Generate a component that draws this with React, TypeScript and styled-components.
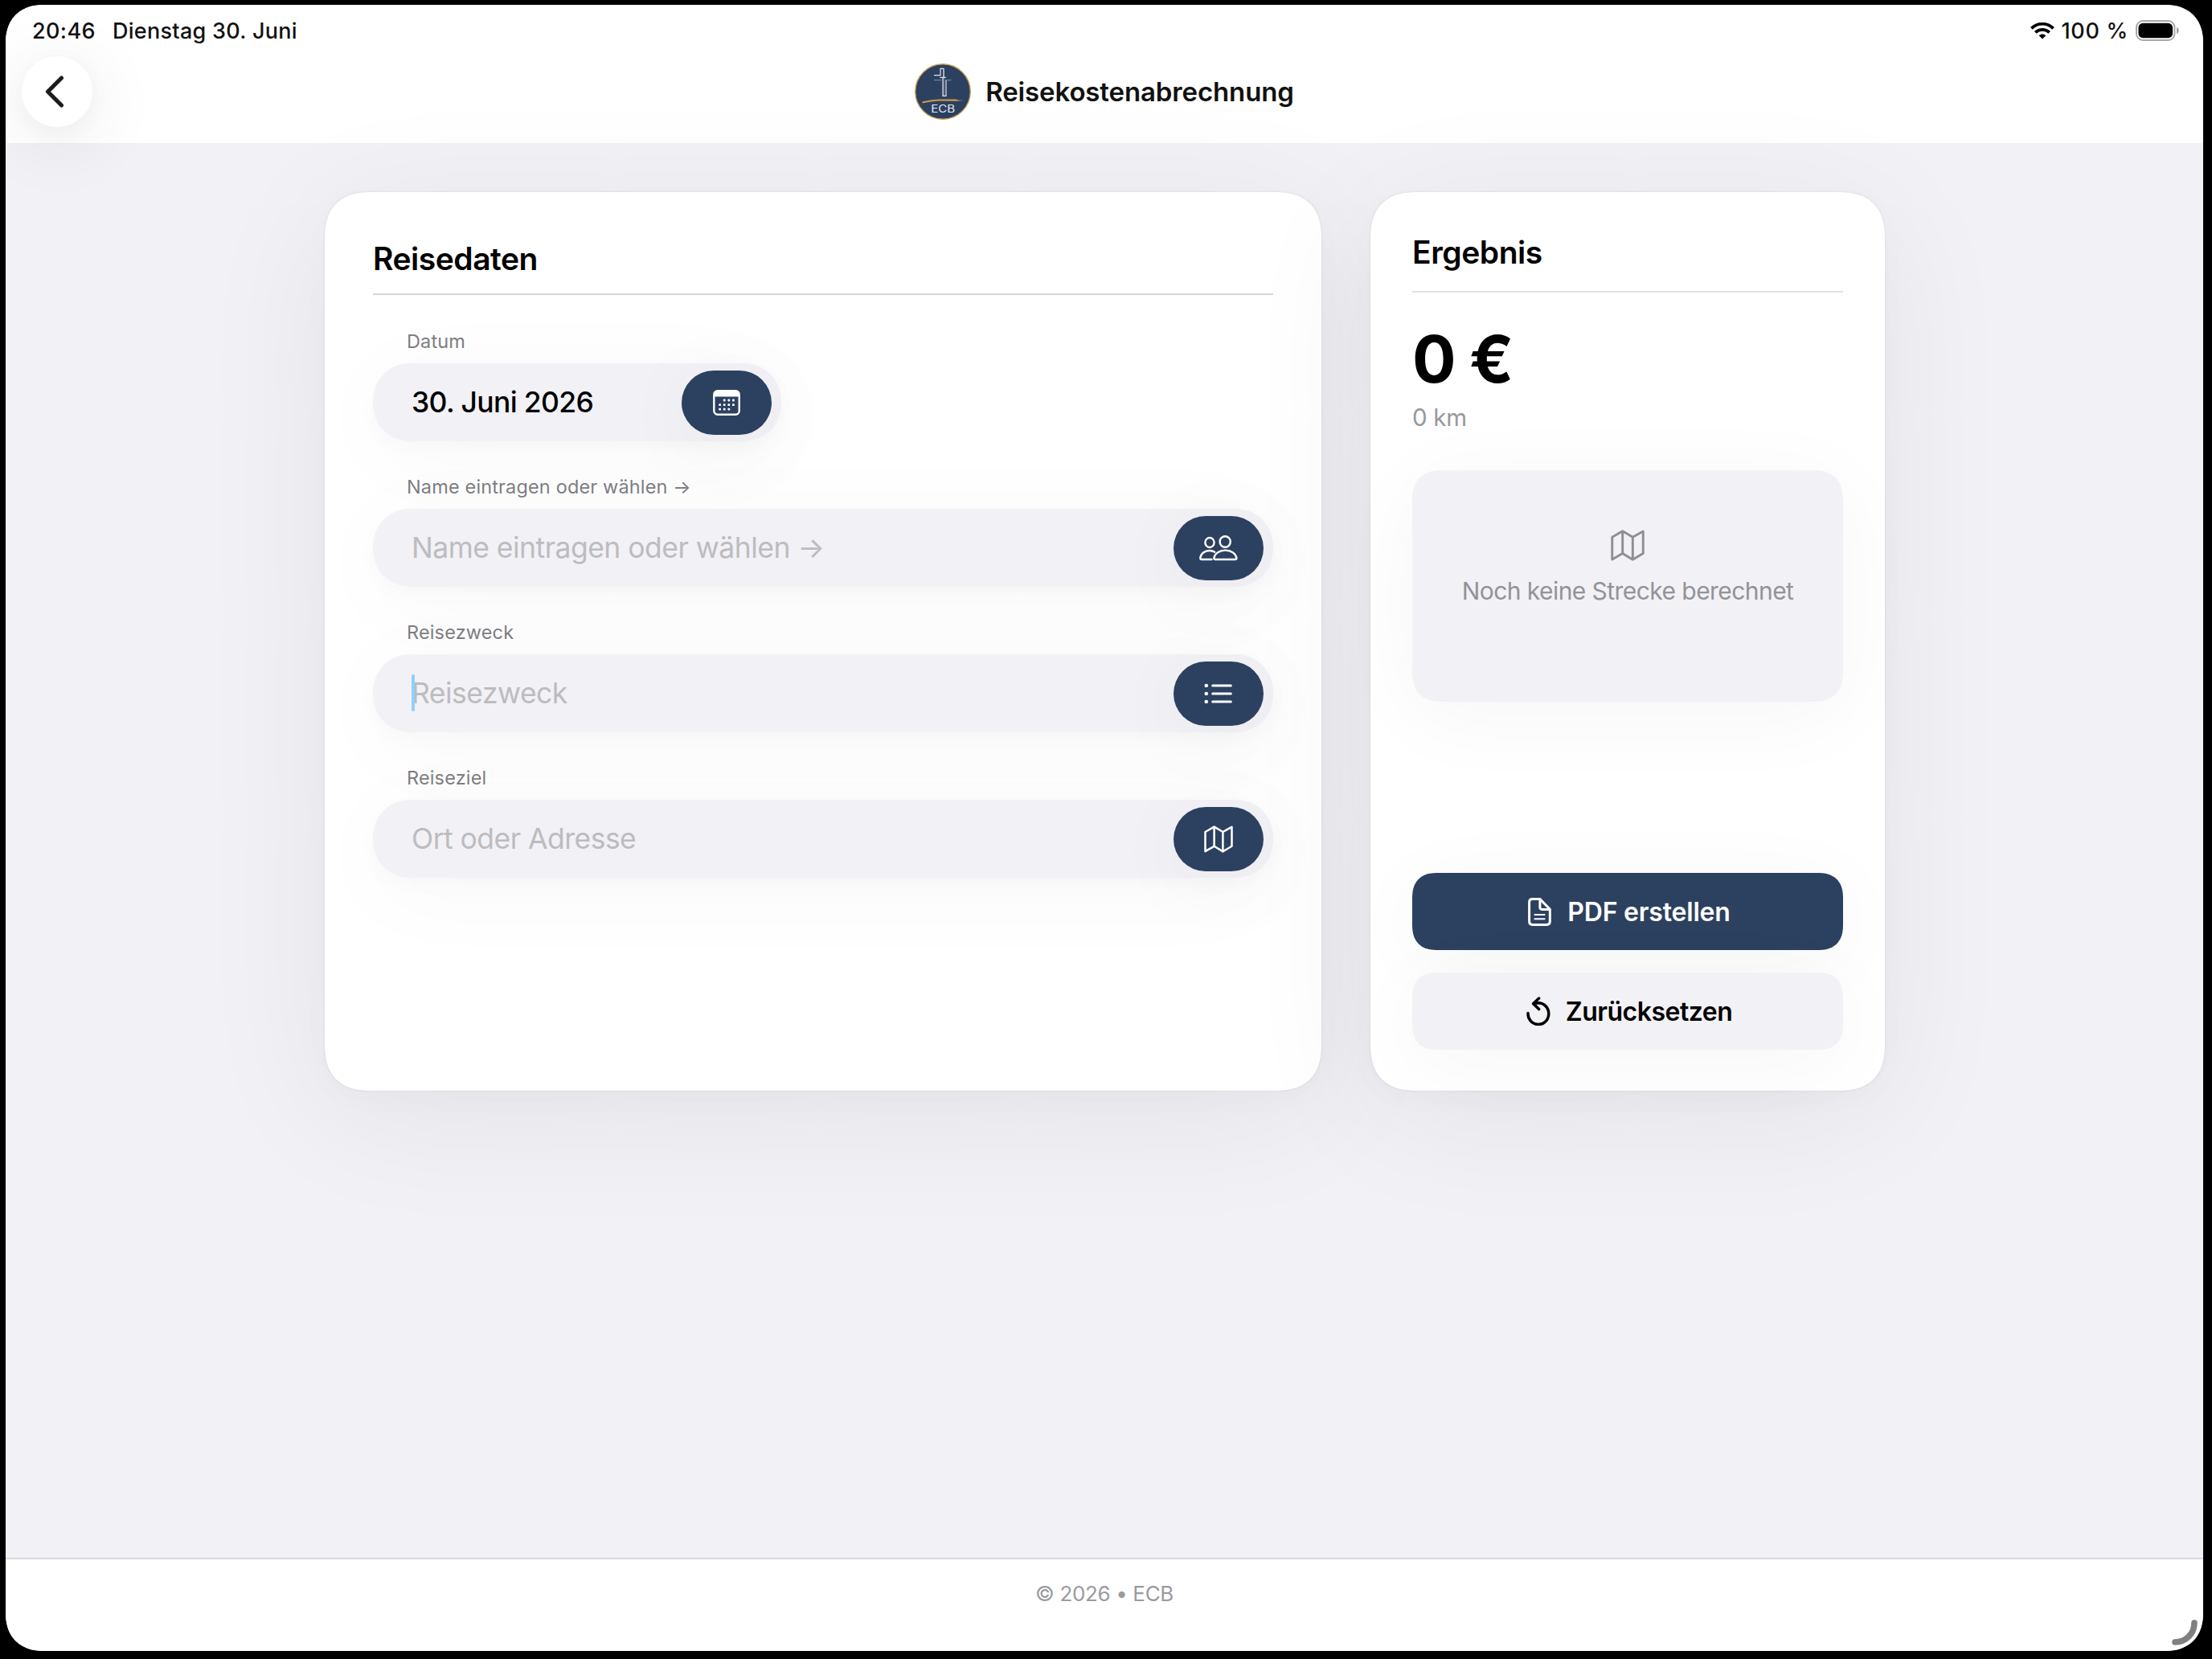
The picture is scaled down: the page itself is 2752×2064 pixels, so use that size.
import React from 'react';
import styled, { createGlobalStyle } from 'styled-components';

const GlobalStyle = createGlobalStyle`
  * {
    box-sizing: border-box;
  }

  body {
    margin: 0;
    background: #000;
    color: #000;
    font-family: Inter, 'Liberation Sans', sans-serif;
  }
`;

const Device = styled.div`
  width: 2752px;
  height: 2064px;
  padding: 6px 11px 10px 7px;
  background: #000;
`;

const Screen = styled.div`
  position: relative;
  display: flex;
  flex-direction: column;
  height: 100%;
  border-radius: 48px;
  corner-shape: superellipse(1.2);
  background: #f2f1f6;
  overflow: hidden;
`;

const Header = styled.header`
  height: 172px;
  background: #fff;
`;

const StatusBar = styled.div`
  display: flex;
  align-items: center;
  height: 64px;
  padding: 0 29px 0 33px;
  font-size: 27px;
  font-weight: 500;
  color: #111;
`;

const Time = styled.span`
  letter-spacing: 0.4px;
`;

const DateText = styled.span`
  flex: 1;
  margin-left: 21px;
  letter-spacing: 0.28px;
`;

const Battery = styled.span`
  margin: 0 9px 0 8px;
  letter-spacing: 0.7px;
`;

const NavBar = styled.div`
  display: grid;
  grid-template-columns: 88px 1fr 88px;
  align-items: center;
  padding: 0 20px;
`;

const BackButton = styled.button`
  display: flex;
  align-items: center;
  justify-content: center;
  width: 88px;
  height: 88px;
  padding: 0 7px 0 0;
  border: none;
  border-radius: 50%;
  background: #fff;
  box-shadow: 0 16px 90px rgba(0, 0, 0, 0.1), 0 6px 30px rgba(0, 0, 0, 0.03);
`;

const Brand = styled.div`
  display: flex;
  align-items: center;
  justify-content: center;
  gap: 18px;
`;

const BrandTitle = styled.h1`
  margin: 0;
  font-size: 33px;
  font-weight: 600;
  letter-spacing: -0.13px;
  color: #111;
`;

const Main = styled.main`
  display: flex;
  flex: 1;
  justify-content: center;
  align-items: flex-start;
  gap: 61px;
  padding: 61px 0 0 1px;
`;

const Card = styled.section<{ $width: number; $padding: string }>`
  display: flex;
  flex-direction: column;
  width: ${p => p.$width}px;
  height: 1118px;
  padding: ${p => p.$padding};
  border-radius: 60px;
  corner-shape: superellipse(1.35);
  background: #fff;
  box-shadow: 0 0 2px 1px rgba(0, 0, 0, 0.045), 0 28px 170px rgba(0, 0, 0, 0.065),
    0 10px 40px rgba(0, 0, 0, 0.018);
`;

const CardTitle = styled.h2<{ $gap: number; $line: string }>`
  margin: 0;
  padding-bottom: ${p => p.$gap}px;
  border-bottom: 2px solid ${p => p.$line};
  font-size: 39px;
  line-height: 48px;
  font-weight: 600;
  letter-spacing: -0.48px;
`;

const Fields = styled.div`
  display: flex;
  flex-direction: column;
  gap: 43px;
  padding-top: 44px;
`;

const Label = styled.div`
  padding-left: 42px;
  margin-bottom: 13px;
  font-size: 23.5px;
  line-height: 28px;
  letter-spacing: 0.15px;
  color: #7d7d82;
`;

const FieldBox = styled.div<{ $narrow?: boolean }>`
  display: flex;
  align-items: center;
  justify-content: space-between;
  width: ${p => (p.$narrow ? '508px' : '100%')};
  height: 97px;
  padding: 0 12px 0 48px;
  border-radius: 52px;
  corner-shape: superellipse(1.1);
  background: #f2f1f6;
  box-shadow: 0 8px 24px rgba(0, 0, 0, 0.022), 0 18px 120px rgba(0, 0, 0, 0.03);
`;

const FieldText = styled.span<{ $filled?: boolean }>`
  position: relative;
  font-size: 35.5px;
  font-weight: ${p => (p.$filled ? 500 : 430)};
  letter-spacing: ${p => (p.$filled ? '-0.64px' : '-0.52px')};
  color: ${p => (p.$filled ? '#000' : '#bcbcc0')};
`;

const Caret = styled.span`
  position: absolute;
  left: 0;
  top: -2px;
  width: 4px;
  height: 46px;
  border-radius: 2px;
  background: #8fd0fc;
`;

const PillButton = styled.button`
  display: flex;
  align-items: center;
  justify-content: center;
  width: 112px;
  height: 80px;
  padding: 0;
  border: none;
  border-radius: 40px;
  background: #2c4060;
  box-shadow: 0 14px 100px rgba(0, 0, 0, 0.05);
`;

const Amount = styled.div`
  margin-top: 33px;
  font-size: 81px;
  line-height: 100px;
  font-weight: 700;
  letter-spacing: -1.4px;
`;

const Distance = styled.div`
  margin-top: 4px;
  font-size: 29.5px;
  line-height: 36px;
  letter-spacing: -0.3px;
  color: #98989d;
`;

const RouteBox = styled.div`
  display: flex;
  flex-direction: column;
  align-items: center;
  justify-content: center;
  gap: 19px;
  height: 288px;
  margin-top: 48px;
  padding-bottom: 46px;
  border-radius: 38px;
  corner-shape: superellipse(1.3);
  background: #f2f1f6;
  box-shadow: 0 18px 110px rgba(0, 0, 0, 0.04);
  font-size: 30px;
  line-height: 36px;
  letter-spacing: -0.56px;
  color: #939398;
`;

const Actions = styled.div`
  display: flex;
  flex-direction: column;
  gap: 28px;
  margin-top: auto;
`;

const ActionButton = styled.button<{ $primary?: boolean }>`
  display: flex;
  align-items: center;
  justify-content: center;
  gap: ${p => (p.$primary ? 20 : 19)}px;
  height: 96px;
  padding: 0 0 0 4px;
  border: none;
  border-radius: 32px;
  corner-shape: superellipse(1.3);
  background: ${p => (p.$primary ? '#2c4060' : '#f2f1f6')};
  box-shadow: 0 14px 100px rgba(0, 0, 0, 0.04);
  font-family: inherit;
  font-size: 32px;
  font-weight: 600;
  letter-spacing: ${p => (p.$primary ? '-0.2px' : '-0.5px')};
  color: ${p => (p.$primary ? '#fff' : '#000')};
`;

const Footer = styled.footer`
  display: flex;
  justify-content: center;
  height: 116px;
  padding-top: 27px;
  border-top: 2px solid #dadadc;
  background: #fff;
  font-size: 26px;
  line-height: 32px;
  letter-spacing: -0.36px;
  color: #9a9a9f;
`;

const CornerHandle = styled.svg`
  position: absolute;
  right: 7px;
  bottom: 7px;
`;

const ChevronIcon = () => (
  <svg width="24" height="42" viewBox="0 0 24 42" fill="none" stroke="#1c1c1c" strokeWidth="5" strokeLinecap="round" strokeLinejoin="round">
    <path d="M20.5 4 L3.5 21 L20.5 38" />
  </svg>
);

const WifiIcon = () => (
  <svg width="30" height="21" viewBox="0 0 30 21" fill="none" stroke="#000" strokeWidth="3.8">
    <path d="M1.4 7.4 C9 -0.2 21 -0.2 28.6 7.4" />
    <path d="M6.3 12.4 C11.2 7.6 18.8 7.6 23.7 12.4" />
    <path d="M15 20.6 L10.7 16.2 C13.2 14 16.8 14 19.3 16.2 Z" fill="#000" stroke="none" />
  </svg>
);

const BatteryIcon = () => (
  <svg width="55" height="26" viewBox="0 0 55 26">
    <rect x="1" y="1" width="47.5" height="24" rx="8" fill="none" stroke="#a8a8a8" strokeWidth="2" />
    <rect x="3.5" y="3.8" width="42.6" height="18.4" rx="5.5" fill="#000" />
    <path d="M51 9 C54.6 10 54.6 16 51 17 Z" fill="#a0a0a0" />
  </svg>
);

const Logo = () => (
  <svg width="70" height="70" viewBox="0 0 70 70" fill="none">
    <circle cx="35" cy="35" r="34.3" fill="#2c4060" stroke="#c9a35a" strokeWidth="1.4" />
    <g stroke="#dfe4ec" strokeWidth="1.2">
      <path d="M24 14.6 H32 V6.4 H36 V17 M35 17 V40.4 H39 V21" />
      <path d="M31.2 17.3 H38.8" />
      <path d="M36.4 7 V40" opacity="0.35" />
      <path d="M24 20.6 H33 M38 20.6 H45.5" opacity="0.4" />
    </g>
    <path d="M9.3 49.5 L9.8 47.3 L20 45.4 L30 44.4 H52 L53.5 45.5 L61.5 46 L52 46.7 L30 46.4 L20 47.4 Z" fill="#cf9f3f" />
    <text x="20.2" y="61.2" textLength="30" lengthAdjust="spacingAndGlyphs" fontFamily="Inter, sans-serif" fontSize="12.4" fill="#e6eaf0">
      ECB
    </text>
  </svg>
);

const CalendarIcon = () => (
  <svg width="34" height="32" viewBox="0 0 34 32">
    <rect x="1.3" y="1.3" width="31.4" height="29.4" rx="4.5" fill="none" stroke="#fff" strokeWidth="2.4" />
    <path d="M1 8.5 V5 Q1 1 5 1 H29 Q33 1 33 5 V8.5 Z" fill="#fff" />
    <g fill="#fff">
      {[13, 18.6, 24.2].map((y, row) =>
        [8.6, 14.2, 19.8, 25.4].map((x, col) =>
          (row === 0 && col === 0) || (row === 2 && col === 3) ? null : (
            <rect key={`${y}-${x}`} x={x - 1.4} y={y - 1.4} width="2.8" height="2.8" rx="0.8" />
          )
        )
      )}
    </g>
  </svg>
);

const PeopleIcon = () => (
  <svg width="48" height="32" viewBox="0 0 48 32" fill="none" stroke="#fff" strokeWidth="2.4" strokeLinecap="round" strokeLinejoin="round">
    <ellipse cx="13" cy="9" rx="5.6" ry="6" />
    <ellipse cx="32.2" cy="8" rx="6.6" ry="6.8" />
    <path d="M15.5 30 H2.9 Q1.2 30 1.3 28.2 C2 22.6 7 19 12.8 19 C15.2 19 17.4 19.6 19.2 20.7" />
    <path d="M20 30 Q18.2 30 18.4 28.2 C19.2 22.8 25 18.6 32.4 18.6 C39.8 18.6 45.5 22.8 46.4 28.2 Q46.6 30 44.8 30 Z" />
  </svg>
);

const ListIcon = () => (
  <svg width="36" height="26" viewBox="0 0 36 26" fill="#fff">
    {[3, 13, 23].map(y => (
      <React.Fragment key={y}>
        <circle cx="2.8" cy={y} r="2.3" />
        <rect x="9.2" y={y - 1.5} width="25.6" height="3" rx="1.5" />
      </React.Fragment>
    ))}
  </svg>
);

const MapIcon: React.FC<{ width: number; height: number; stroke: string }> = ({ width, height, stroke }) => (
  <svg width={width} height={height} viewBox="0 0 36 34" preserveAspectRatio="none" fill="none" stroke={stroke} strokeWidth="2.5" strokeLinejoin="round">
    <path d="M1.5 8 L12.6 1.6 L23.4 8 L34.5 1.8 V25.8 L23.4 32.4 L12.6 25.8 L1.5 32.2 Z" />
    <path d="M12.6 1.6 V25.8 M23.4 8 V32.4" />
  </svg>
);

const DocumentIcon = () => (
  <svg width="29" height="35" viewBox="0 0 29 35" fill="none" stroke="#fff" strokeWidth="3" strokeLinejoin="round" strokeLinecap="round">
    <path d="M5.5 1.6 H15 L27.3 14.2 V29.5 Q27.3 33.4 23.4 33.4 H5.5 Q1.6 33.4 1.6 29.5 V5.5 Q1.6 1.6 5.5 1.6 Z" />
    <path d="M14.9 2 V11.8 Q14.9 14.4 17.5 14.4 H27" />
    <path d="M8.4 21 H20.6 M8.4 26.2 H20.6" strokeWidth="2" />
  </svg>
);

const ResetIcon = () => (
  <svg width="30" height="36" viewBox="0 0 30 36" fill="none" stroke="#000" strokeWidth="3.5" strokeLinecap="round" strokeLinejoin="round">
    <path d="M2 20.5 A12.9 13.4 0 1 0 14.9 7.8 L9.5 8.2" />
    <path d="M15.6 2 L8.6 8.8 L15.6 15.6" />
  </svg>
);

interface FieldProps {
  label: string;
  text: string;
  icon: React.ReactNode;
  filled?: boolean;
  focused?: boolean;
}

const Field: React.FC<FieldProps> = ({ label, text, icon, filled, focused }) => (
  <div>
    <Label>{label}</Label>
    <FieldBox $narrow={filled}>
      <FieldText $filled={filled}>
        {text}
        {focused && <Caret />}
      </FieldText>
      <PillButton>{icon}</PillButton>
    </FieldBox>
  </div>
);

const App: React.FC = () => {
  return (
    <Device>
      <GlobalStyle />
      <Screen>
        <Header>
          <StatusBar>
            <Time>20:46</Time>
            <DateText>Dienstag 30. Juni</DateText>
            <WifiIcon />
            <Battery>100 %</Battery>
            <BatteryIcon />
          </StatusBar>
          <NavBar>
            <BackButton>
              <ChevronIcon />
            </BackButton>
            <Brand>
              <Logo />
              <BrandTitle>Reisekostenabrechnung</BrandTitle>
            </Brand>
          </NavBar>
        </Header>

        <Main>
          <Card $width={1240} $padding="59px 60px 0 60px">
            <CardTitle $gap={19} $line="#d6d6d8">Reisedaten</CardTitle>
            <Fields>
              <Field label="Datum" text="30. Juni 2026" icon={<CalendarIcon />} filled />
              <Field label="Name eintragen oder wählen →" text="Name eintragen oder wählen →" icon={<PeopleIcon />} />
              <Field label="Reisezweck" text="Reisezweck" icon={<ListIcon />} focused />
              <Field label="Reiseziel" text="Ort oder Adresse" icon={<MapIcon width={36} height={34} stroke="#fff" />} />
            </Fields>
          </Card>

          <Card $width={640} $padding="51px 52px">
            <CardTitle $gap={24} $line="#e0e0e1">Ergebnis</CardTitle>
            <Amount>0 €</Amount>
            <Distance>0 km</Distance>
            <RouteBox>
              <MapIcon width={42} height={39} stroke="#8e8e93" />
              <span>Noch keine Strecke berechnet</span>
            </RouteBox>
            <Actions>
              <ActionButton $primary>
                <DocumentIcon />
                PDF erstellen
              </ActionButton>
              <ActionButton>
                <ResetIcon />
                Zurücksetzen
              </ActionButton>
            </Actions>
          </Card>
        </Main>

        <Footer>© 2026 • ECB</Footer>

        <CornerHandle width="32" height="32" viewBox="0 0 32 32" fill="none">
          <path d="M28 4 C28 17 18 28 4 28" stroke="#808080" strokeWidth="7.5" strokeLinecap="round" />
        </CornerHandle>
      </Screen>
    </Device>
  );
};

export default App;
